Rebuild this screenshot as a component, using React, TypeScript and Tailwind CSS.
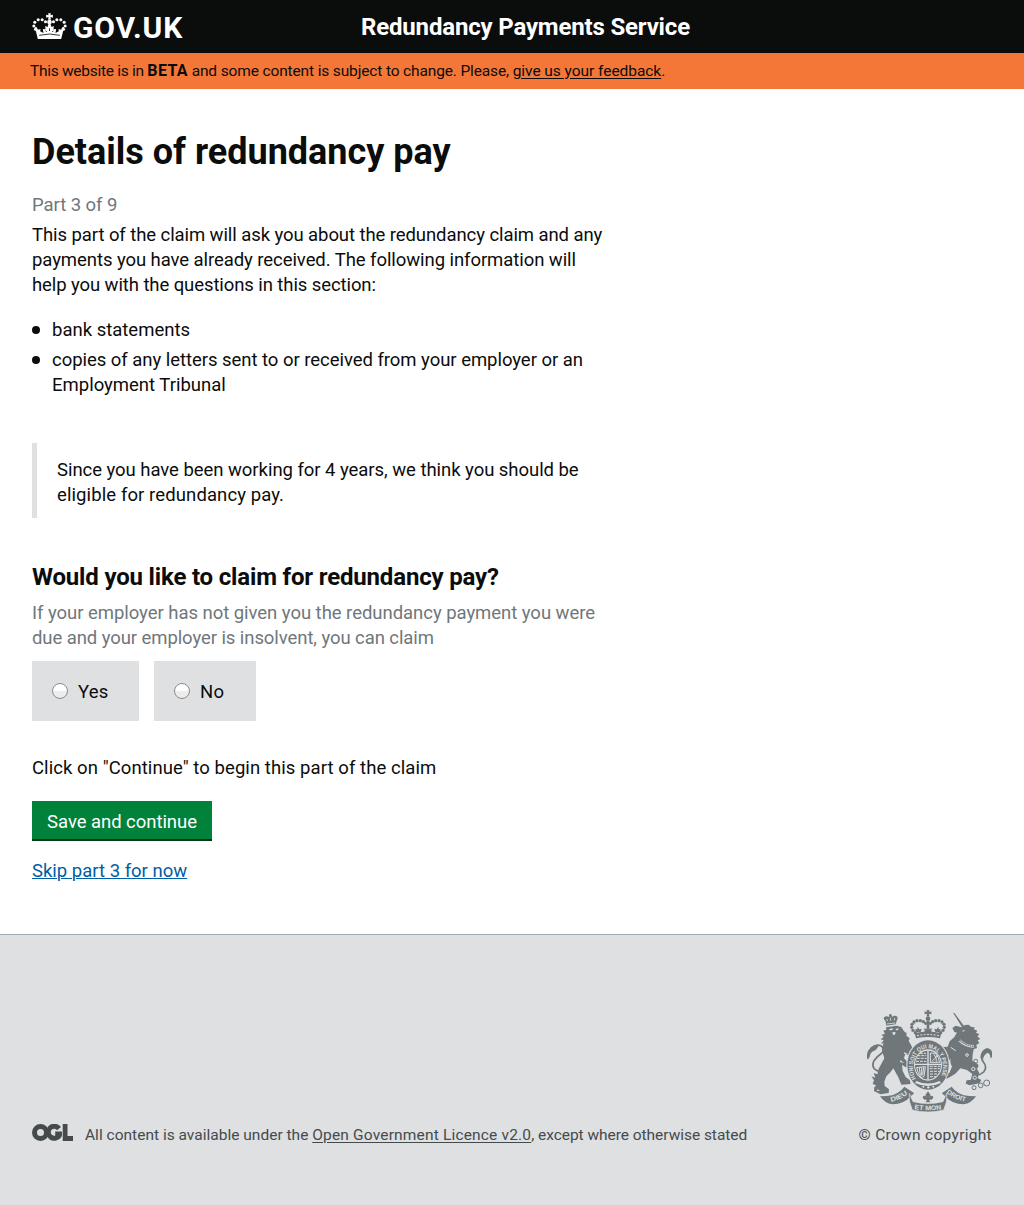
function GovCrown() {
  const arcDots: [number, number][] = [
    [47, 87], [42, 77], [45, 66], [55, 58], [67, 58], [77, 64],
    [131, 87], [136, 77], [133, 66], [123, 58], [111, 58], [101, 64],
  ];
  return (
    <svg viewBox="37 38 104 78" className="mb-0.5 h-[26px] w-[35px] fill-white" aria-hidden="true">
      {arcDots.map(([x, y]) => (
        <circle key={`${x}-${y}`} cx={x} cy={y} r="4.6" />
      ))}
      <path d="M85 39h8l-1 6 7-2v9l-7-2 1 8h-8l1-8-7 2v-9l7 2z" />
      <circle cx="89" cy="65" r="7" />
      <path d="M86 70h6l3 10 7-3-1 10 8-1-2 12 10-5-1-7 8 2 3-7 6-1-9 36H54l-9-36 6 1 3 7 8-2-1 7 10 5-2-12 8 1-1-10 7 3z" />
      <g stroke="#0b0c0c" strokeWidth="2.5" fill="none">
        <path d="M58 105q31-8 62 0" />
        <path d="M77 91l4 4M101 91l-4 4M89 84v8" />
      </g>
    </svg>
  );
}

function OglLogo() {
  return (
    <svg viewBox="0 0 41 17" className="h-[17px] w-[41px]" aria-label="OGL" fill="none" stroke="#454a4c">
      <circle cx="8.5" cy="8.5" r="6" strokeWidth="5" />
      <path d="M27 4.6A6 6 0 1 0 27.6 11V10h-4.4" strokeWidth="5" />
      <path d="M33 0v14.4H41" strokeWidth="5" />
      <path d="M30.4 0v17" stroke="#dee0e2" strokeWidth="0.5" />
    </svg>
  );
}

function RoyalArms() {
  const crownDots: [number, number][] = [
    [181, 98], [174, 91], [170, 82], [171, 73], [177, 66], [186, 62], [196, 62], [205, 65], [212, 70],
    [257, 98], [264, 91], [268, 82], [267, 73], [261, 66], [252, 62], [242, 62], [233, 65], [226, 70],
  ];
  return (
    <svg viewBox="36 30 375 306" className="h-[102px] w-[125px]" fill="#6f777b" aria-hidden="true">
      <defs>
        <path id="garter" d="M183 236A45 57 0 1 1 255 236" />
        <path id="dieu" d="M104 305Q138 302 166 275" />
        <path id="mon" d="M172 326Q219 336 266 326" />
        <path id="droit" d="M271 275Q299 302 342 306" />
      </defs>

      {/* imperial crown */}
      {crownDots.map(([x, y]) => (
        <circle key={`${x}-${y}`} cx={x} cy={y} r="5" />
      ))}
      <path d="M215 30h8l-1 6 7-2v9l-7-2 1 8h-8l1-8-7 2v-9l7 2z" />
      <circle cx="219" cy="56" r="7" />
      <path d="M215 62h8v26h-8zM207 84l8 4 4-8 4 8 8-4-2 8 2 7h-24l2-7zM188 80l5 8 7-2-3 10h-14l-2-8 6-1zM250 80l-5 8-7-2 3 10h14l2-8-6-1z" />
      <path d="M179 99q40-9 80 0l-4 16q-36-8-72 0z" />
      <path d="M186 107q33-7 66 0" fill="none" stroke="#dee0e2" strokeWidth="3" strokeDasharray="6 4" />

      {/* lion's crown */}
      <circle cx="106" cy="46" r="4" />
      <path d="M91 62q-8-6-3-11 7-5 13 0l3-4h5l3 3q6-5 12-2 7 4 2 12l-4 13-28 4z" />
      <path d="M95 72l26-3M95 57l3 6M119 54l-1 7M106 53l1 9" stroke="#dee0e2" strokeWidth="2.5" />

      {/* lion */}
      <path d="M93 82l32-5 14 4 8 13 8 6-1 7 10 8-3 8 6 10 8 17 10 8-7 10-11-1-16-5-4 12 12 15 8 7-4 8-14-4-8-6 2 19 9 18 12 9 3 12-28 2-9-22-15-27-9 12-12 12-6 16 1 13 13 10-1 11-25 4-19-10 1-12 6-4-11-6 4-10-8-12 12 4-5-14 11 4 4-17 9-16 8-15-5-17-2-15 5-13-8 1 8-10-9-3 9-7-6-7 10-3-5-9 9-3z" />
      <path
        d="M39 177q-4-20 11-34 14-12 29-5 11 8 2 21-16 11-24 23-9 20 7 29 9 5 20 0"
        fill="none"
        stroke="#6f777b"
        strokeWidth="5"
      />
      <path d="M37 174q0-22 16-33 9-6 18-5-4 14-17 18-9 5-10 18z" />
      <g fill="#dee0e2">
        <path d="M101 88l11-3 2 4-9 2zM122 87l9-2-2 5-6 1zM112 97l10-1-3 10-6-3z" />
        <path d="M66 268l9 3-8 3zM147 157l12 4-11 1zM136 181l12 8-13-3z" />
      </g>

      {/* unicorn */}
      <path d="M294 38l5 2 32 43-7 3zM324 80l-15 14-9 13 6 8 12-2 16-9z" />
      <path d="M320 82l10-7 11-1 8 7 10 1-2 6 10 4-4 6 10 5-6 6 9 8-8 4 5 9-9 4 2 10-10 4-3 16q-1 10-1 19 13 3 19 14l-5 10 7 12-5 15 11 6-6 10-26 5-15-4 3-10 12-1 5-18-16-12-20-5-15 16-21 13-20 7-9-5 5-9 27-8 8-19q-8-14-3-27l-14-12-18-6-6-10 8-9 9 5 11-1 6-16 15-14 8-12-9-2-6-12 10-7z" />
      <path d="M296 164q-8 15-18 19l-15-4 2-8 12 1 8-14z" />
      <path
        d="M354 224q18 5 32-8 12-15-1-30-11-15 1-31 9-12 19-4 6 7 3 21"
        fill="none"
        stroke="#6f777b"
        strokeWidth="5"
      />
      <path d="M376 172q2-22 19-27 16 0 16 19-2 8-3 12-4-20-13-16-8 5-11 18z" />
      <g fill="none" stroke="#dee0e2" strokeWidth="3">
        <path d="M313 121q18 18 44 18" strokeWidth="8" />
        <path d="M313 121q20 16 44 18" stroke="#6f777b" strokeWidth="4" strokeDasharray="5 2" />
        <circle cx="336" cy="165" r="4" />
        <circle cx="355" cy="207" r="5" />
        <circle cx="359" cy="233" r="5" />
        <path d="M322 93l7-1M287 142l15 10" />
      </g>
      <g fill="none" stroke="#6f777b" strokeWidth="3">
        <circle cx="343" cy="248" r="6" />
        <circle cx="357" cy="263" r="6" />
        <circle cx="377" cy="256" r="7" />
        <circle cx="395" cy="249" r="9" />
        <circle cx="362" cy="184" r="6" />
      </g>

      {/* garter and shield */}
      <ellipse cx="219" cy="195" rx="65" ry="77" fill="#dee0e2" />
      <ellipse cx="219" cy="195" rx="62" ry="74" />
      <ellipse cx="219" cy="195" rx="42" ry="47" fill="#dee0e2" />
      <ellipse cx="219" cy="195" rx="39" ry="43" />
      <g fill="none" stroke="#dee0e2" strokeWidth="3">
        <path d="M219 152v86M180 193h78" strokeWidth="4" />
        <path d="M187 167h27M185 175h30M183 184h31M195 160h18" strokeDasharray="9 3" />
        <path d="M225 222h24M225 230h18M225 214h29M224 206h31M224 199h32" strokeDasharray="9 3" />
        <path d="M226 159v28h28q-2-15-13-27zM236 163q10 8 8 22M247 166q-8 10-16 18" />
        <path d="M185 203l26-3-4 29-8 4q-11-12-14-30zM193 203l3 23M200 202v25M206 202l-3 23" />
      </g>
      <g fill="#dee0e2">
        <path d="M184 243q35 15 70 0l4 6q-39 18-78 0z" />
        <circle cx="205" cy="260" r="3" />
        <circle cx="220" cy="262" r="3.5" />
        <circle cx="235" cy="260" r="3" />
        <text className="font-['Liberation_Sans'] text-[18px] font-bold">
          <textPath href="#garter" textLength="222" lengthAdjust="spacingAndGlyphs">HONI SOIT QUI MAL Y PENSE</textPath>
        </text>
      </g>

      {/* motto ribbon */}
      <path d="M75 289l20-1q36-3 53-28l30 20-10 8q-20 24-56 25-22-2-37-24z" />
      <path d="M363 289l-20-1q-36-3-53-28l-30 20 10 8q20 24 56 25 22-2 37-24z" />
      <path
        d="M163 280l11 25q45 11 90 0l11-25q1 14-1 26l-8 24q-47 12-94 0l-8-24q-2-11-1-26z"
        stroke="#dee0e2"
        strokeWidth="2"
      />
      <path d="M176 275q43 12 86 0l-3 25q-40 9-80 0z" fill="#dee0e2" />
      <path d="M219 274l8 11-5 8q4-8 11-5 5 6-4 11h-7l4 8h-14l4-8h-7q-9-5-4-11 7-3 11 5l-5-8z" />
      <g fill="#dee0e2" className="font-['Liberation_Sans'] text-[20px] font-bold">
        <text><textPath href="#dieu" startOffset="4" textLength="56" lengthAdjust="spacingAndGlyphs">DIEU</textPath></text>
        <text><textPath href="#mon" startOffset="6" textLength="82" lengthAdjust="spacingAndGlyphs">ET MON</textPath></text>
        <text><textPath href="#droit" startOffset="4" textLength="64" lengthAdjust="spacingAndGlyphs">DROIT</textPath></text>
      </g>
    </svg>
  );
}

function RadioOption({ label, width }: { label: string; width: string }) {
  return (
    <label className={`flex h-[60px] items-center bg-[#dee0e2] pl-5 ${width}`}>
      <input
        type="radio"
        name="claim"
        className="size-4 appearance-none rounded-full border border-[#8b8b8b] bg-linear-to-b from-white from-45% to-[#ececec] to-55%"
      />
      <span className="ml-2.5 pt-0.5 tracking-[0.2px]">{label}</span>
    </label>
  );
}

export default function App() {
  return (
    <div className="flex min-h-[1205px] flex-col bg-white font-['Roboto',sans-serif] text-[18.5px] leading-[25px] text-[#0b0c0c]">
      <header className="flex h-[53px] items-center bg-[#0b0c0c] px-8 text-white">
        <a className="flex w-[329px] items-center gap-[6px]">
          <GovCrown />
          <span className="pt-0.5 text-[30px] leading-[30px] font-bold tracking-[0.9px]">GOV.UK</span>
        </a>
        <span className="text-2xl font-bold tracking-[-0.17px] whitespace-nowrap">Redundancy Payments Service</span>
      </header>

      <div className="flex h-9 items-center bg-[#f47738] pl-[30px] text-[15.5px] whitespace-pre">
        <p>
          <span className="tracking-[-0.28px]">This website is in </span>
          <strong className="text-base tracking-[0.35px]">BETA</strong>
          <span className="tracking-[-0.14px]"> and some content is subject to change. Please, </span>
          <a className="tracking-[-0.05px] underline underline-offset-2">give us your feedback</a>.
        </p>
      </div>

      <main className="flex h-[845px] flex-col items-start px-8 pt-[43px] whitespace-nowrap">
        <h1 className="text-4xl leading-10 font-bold">Details of redundancy pay</h1>
        <p className="mt-[21px] tracking-[-0.06px] text-[#6f777b]">Part 3 of 9</p>
        <p className="mt-[5px]">
          <span className="tracking-[-0.08px]">This part of the claim will ask you about the redundancy claim and any</span>
          <br />
          <span className="tracking-[-0.07px]">payments you have already received. The following information will</span>
          <br />
          <span className="tracking-[-0.09px]">help you with the questions in this section:</span>
        </p>
        <ul className="mt-5 flex flex-col gap-[5px]">
          <li className="flex gap-3">
            <span className="mt-2 size-2 rounded-full bg-[#0b0c0c]" />
            bank statements
          </li>
          <li className="flex gap-3">
            <span className="mt-2 size-2 rounded-full bg-[#0b0c0c]" />
            <p>
              <span className="tracking-[-0.04px]">copies of any letters sent to or received from your employer or an</span>
              <br />
              Employment Tribunal
            </p>
          </li>
        </ul>
        <div className="mt-[45px] border-l-[5px] border-[#dee0e2] pt-[15px] pb-[10px] pl-5">
          <span className="tracking-[-0.045px]">Since you have been working for 4 years, we think you should be</span>
          <br />
          <span className="tracking-[0.1px]">eligible for redundancy pay.</span>
        </div>
        <h2 className="mt-11 text-2xl leading-[30px] font-bold tracking-[-0.17px]">
          Would you like to claim for redundancy pay?
        </h2>
        <p className="mt-[9px] text-[#6f777b]">
          <span className="tracking-[-0.04px]">If your employer has not given you the redundancy payment you were</span>
          <br />
          <span className="tracking-[-0.08px]">due and your employer is insolvent, you can claim</span>
        </p>
        <div className="mt-[10px] flex gap-[15px]">
          <RadioOption label="Yes" width="w-[107px]" />
          <RadioOption label="No" width="w-[102px]" />
        </div>
        <p className="mt-[35px] tracking-[0.07px]">Click on "Continue" to begin this part of the claim</p>
        <button className="mt-5 flex h-10 w-[180px] items-center justify-center border-b-2 border-[#003618] bg-[#00823b] pt-[5px] tracking-[-0.05px] text-white">
          Save and continue
        </button>
        <a className="mt-[18px] text-[#005ea5] underline decoration-1 underline-offset-1">Skip part 3 for now</a>
      </main>

      <footer className="flex h-[271px] items-end justify-between border-t border-[#a1acb2] bg-[#dee0e2] px-8 pb-[57px] text-[15.5px] text-[#454a4c]">
        <div className="flex items-start gap-3 whitespace-pre">
          <div className="pt-px"><OglLogo /></div>
          <p>
            <span className="tracking-[0.01px]">All content is available under the </span>
            <a className="tracking-[0.17px] underline underline-offset-2">Open Government Licence v2.0</a>
            <span className="tracking-[-0.04px]">, except where otherwise stated</span>
          </p>
        </div>
        <div className="flex flex-col items-end gap-[11px]">
          <RoyalArms />
          <p className="tracking-[0.3px]">© Crown copyright</p>
        </div>
      </footer>
    </div>
  );
}
